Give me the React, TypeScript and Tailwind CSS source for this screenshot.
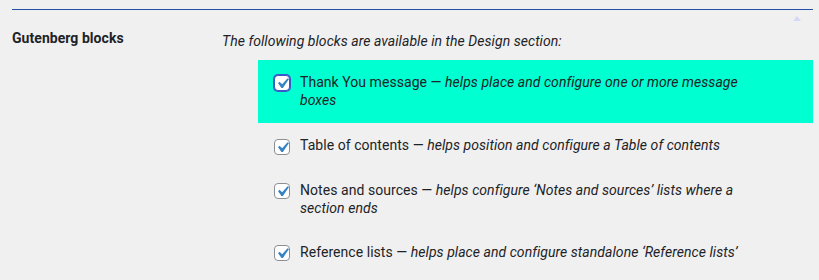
import React from "react";

function Check({ focused }: { focused?: boolean }) {
  return (
    <span
      className={
        "relative mt-[2.5px] flex h-[16px] w-[16px] shrink-0 items-center justify-center rounded-[4px] border bg-white " +
        (focused
          ? "border-[#3858c8] shadow-[0_0_0_1px_#3858c8]"
          : "border-[#8c8f94]")
      }
    >
      <svg viewBox="0 0 20 20" className="absolute left-[-3px] top-[-3px] h-[21px] w-[21px]">
        <path d="M14.83 4.89l1.34.94-5.81 8.38H9.02L5.78 9.67l1.34-1.25 2.57 2.4z" fill="#3582c4" />
      </svg>
    </span>
  );
}

const items = [
  { title: "Thank You message", desc: "helps place and configure one or more message boxes", hl: true },
  { title: "Table of contents", desc: "helps position and configure a Table of contents" },
  { title: "Notes and sources", desc: "helps configure \u2018Notes and sources\u2019 lists where a section ends" },
  { title: "Reference lists", desc: "helps place and configure standalone \u2018Reference lists\u2019" },
];

export default function App() {
  return (
    <div className="relative h-[280px] w-[819px] overflow-hidden bg-[#f0f0f0] font-['Roboto',sans-serif] text-[14px] leading-[1.3] tracking-[0.05px] text-[#1d2327]">
      <div className="px-[12px] pt-[9px]">
        <div className="h-px w-[801px] bg-[#2350a8]" />
      </div>
      <div className="absolute left-[793px] top-[16px] h-0 w-0 border-x-[4px] border-b-[5px] border-x-transparent border-b-[#d6d8f8]" />
      <div className="flex pl-[12px]">
        <div className="w-[210px] pt-[19px] font-bold">Gutenberg blocks</div>
        <div className="pt-[21.5px]">
          <p className="italic">The following blocks are available in the Design section:</p>
          <ul className="ml-[36px] mt-[10px] w-[555px]">
            {items.map((it) => (
              <li
                key={it.title}
                className={
                  "flex gap-[10px] pl-[16px] " +
                  (it.hl ? "bg-[#00ffd1] pb-[14px] pt-[13px]" : "py-[13px]")
                }
              >
                <Check focused={it.hl} />
                <span className="w-[462px]">
                  {it.title} — <em>{it.desc}</em>
                </span>
              </li>
            ))}
          </ul>
        </div>
      </div>
    </div>
  );
}
